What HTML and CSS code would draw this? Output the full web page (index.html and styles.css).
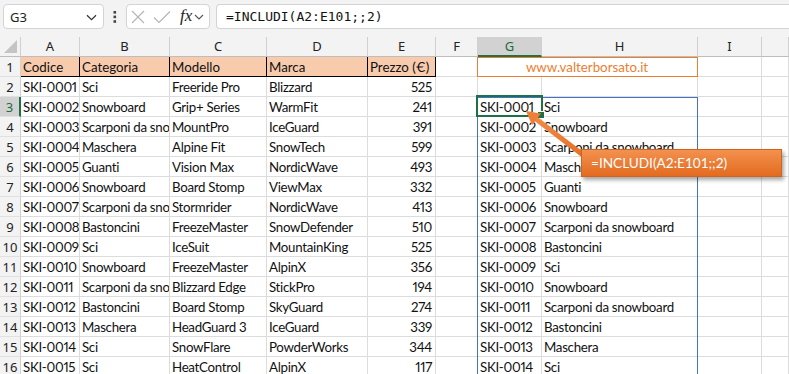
FILE: index.html
```html
<!DOCTYPE html>
<html lang="it">
<head>
<meta charset="utf-8">
<title>INCLUDI</title>
<link rel="stylesheet" href="styles.css">
</head>
<body>
<div class="app">
  <div class="fbar">
    <div class="namebox">
      <span class="nb-text">G3</span>
      <svg class="chev" width="11" height="7" viewBox="0 0 11 7"><path d="M1 1.2 L5.5 5.6 L10 1.2" fill="none" stroke="#333" stroke-width="1.2"/></svg>
    </div>
    <div class="dots">
      <svg width="4" height="12" viewBox="0 0 4 12"><rect x="0.5" y="0" width="2.6" height="2.6" fill="#444"/><rect x="0.5" y="4.6" width="2.6" height="2.6" fill="#444"/><rect x="0.5" y="9.2" width="2.6" height="2.6" fill="#444"/></svg>
    </div>
    <div class="fnbox">
      <svg class="ic-x" width="14" height="14" viewBox="0 0 14 14"><path d="M1 1 L13 13 M13 1 L1 13" stroke="#b4b4b4" stroke-width="1.1" fill="none"/></svg>
      <svg class="ic-check" width="18" height="14" viewBox="0 0 18 14"><path d="M1 7.5 L6 12.5 L17 1.5" stroke="#b4b4b4" stroke-width="1.1" fill="none"/></svg>
      <span class="fx">fx</span>
      <svg class="chev2" width="10" height="6" viewBox="0 0 10 6"><path d="M1 1 L5 5 L9 1" fill="none" stroke="#555" stroke-width="1.1"/></svg>
    </div>
    <div class="formula">=INCLUDI(A2:E101;;2)</div>
  </div>

  <div class="sheet">
    <div class="corner"><svg width="13" height="13" viewBox="0 0 13 13"><path d="M13 0 L13 13 L0 13 Z" fill="#c4c4c4"/></svg></div>
    <div class="ch">A</div><div class="ch">B</div><div class="ch">C</div><div class="ch">D</div><div class="ch">E</div><div class="ch">F</div><div class="ch ch-sel">G</div><div class="ch">H</div><div class="ch">I</div><div class="ch"></div>

    <div class="rh">1</div>
    <div class="c hd">Codice</div><div class="c hd">Categoria</div><div class="c hd">Modello</div><div class="c hd">Marca</div><div class="c hd">Prezzo (€)</div>
    <div class="c"></div>
    <div class="c web">www.valterborsato.it</div>
    <div class="c"></div><div class="c"></div>

    <div class="rh">2</div>
    <div class="c">SKI-0001</div><div class="c">Sci</div><div class="c">Freeride Pro</div><div class="c">Blizzard</div><div class="c n">525</div>
    <div class="c"></div><div class="c"></div><div class="c"></div><div class="c"></div><div class="c"></div>

    <div class="rh rh-sel">3</div>
    <div class="c">SKI-0002</div><div class="c">Snowboard</div><div class="c">Grip+ Series</div><div class="c">WarmFit</div><div class="c n">241</div>
    <div class="c"></div><div class="c">SKI-0001</div><div class="c">Sci</div><div class="c"></div><div class="c"></div>

    <div class="rh">4</div>
    <div class="c">SKI-0003</div><div class="c">Scarponi da snowboard</div><div class="c">MountPro</div><div class="c">IceGuard</div><div class="c n">391</div>
    <div class="c"></div><div class="c">SKI-0002</div><div class="c">Snowboard</div><div class="c"></div><div class="c"></div>

    <div class="rh">5</div>
    <div class="c">SKI-0004</div><div class="c">Maschera</div><div class="c">Alpine Fit</div><div class="c">SnowTech</div><div class="c n">599</div>
    <div class="c"></div><div class="c">SKI-0003</div><div class="c">Scarponi da snowboard</div><div class="c"></div><div class="c"></div>

    <div class="rh">6</div>
    <div class="c">SKI-0005</div><div class="c">Guanti</div><div class="c">Vision Max</div><div class="c">NordicWave</div><div class="c n">493</div>
    <div class="c"></div><div class="c">SKI-0004</div><div class="c">Maschera</div><div class="c"></div><div class="c"></div>

    <div class="rh">7</div>
    <div class="c">SKI-0006</div><div class="c">Snowboard</div><div class="c">Board Stomp</div><div class="c">ViewMax</div><div class="c n">332</div>
    <div class="c"></div><div class="c">SKI-0005</div><div class="c">Guanti</div><div class="c"></div><div class="c"></div>

    <div class="rh">8</div>
    <div class="c">SKI-0007</div><div class="c">Scarponi da snowboard</div><div class="c">Stormrider</div><div class="c">NordicWave</div><div class="c n">413</div>
    <div class="c"></div><div class="c">SKI-0006</div><div class="c">Snowboard</div><div class="c"></div><div class="c"></div>

    <div class="rh">9</div>
    <div class="c">SKI-0008</div><div class="c">Bastoncini</div><div class="c">FreezeMaster</div><div class="c">SnowDefender</div><div class="c n">510</div>
    <div class="c"></div><div class="c">SKI-0007</div><div class="c">Scarponi da snowboard</div><div class="c"></div><div class="c"></div>

    <div class="rh">10</div>
    <div class="c">SKI-0009</div><div class="c">Sci</div><div class="c">IceSuit</div><div class="c">MountainKing</div><div class="c n">525</div>
    <div class="c"></div><div class="c">SKI-0008</div><div class="c">Bastoncini</div><div class="c"></div><div class="c"></div>

    <div class="rh">11</div>
    <div class="c">SKI-0010</div><div class="c">Snowboard</div><div class="c">FreezeMaster</div><div class="c">AlpinX</div><div class="c n">356</div>
    <div class="c"></div><div class="c">SKI-0009</div><div class="c">Sci</div><div class="c"></div><div class="c"></div>

    <div class="rh">12</div>
    <div class="c">SKI-0011</div><div class="c">Scarponi da snowboard</div><div class="c">Blizzard Edge</div><div class="c">StickPro</div><div class="c n">194</div>
    <div class="c"></div><div class="c">SKI-0010</div><div class="c">Snowboard</div><div class="c"></div><div class="c"></div>

    <div class="rh">13</div>
    <div class="c">SKI-0012</div><div class="c">Bastoncini</div><div class="c">Board Stomp</div><div class="c">SkyGuard</div><div class="c n">274</div>
    <div class="c"></div><div class="c">SKI-0011</div><div class="c">Scarponi da snowboard</div><div class="c"></div><div class="c"></div>

    <div class="rh">14</div>
    <div class="c">SKI-0013</div><div class="c">Maschera</div><div class="c">HeadGuard 3</div><div class="c">IceGuard</div><div class="c n">339</div>
    <div class="c"></div><div class="c">SKI-0012</div><div class="c">Bastoncini</div><div class="c"></div><div class="c"></div>

    <div class="rh">15</div>
    <div class="c">SKI-0014</div><div class="c">Sci</div><div class="c">SnowFlare</div><div class="c">PowderWorks</div><div class="c n">344</div>
    <div class="c"></div><div class="c">SKI-0013</div><div class="c">Maschera</div><div class="c"></div><div class="c"></div>

    <div class="rh">16</div>
    <div class="c">SKI-0015</div><div class="c">Sci</div><div class="c">HeatControl</div><div class="c">AlpinX</div><div class="c n">117</div>
    <div class="c"></div><div class="c">SKI-0014</div><div class="c">Sci</div><div class="c"></div><div class="c"></div>

    <div class="spill"></div>
    <div class="selection"><div class="handle"></div></div>
  </div>

  <svg class="arrow" width="789" height="374" viewBox="0 0 789 374">
    <defs>
      <linearGradient id="ag" x1="0" y1="0" x2="1" y2="1">
        <stop offset="0" stop-color="#f08a45"/>
        <stop offset="1" stop-color="#e2691d"/>
      </linearGradient>
    </defs>
    <line x1="600" y1="168" x2="536" y2="119" stroke="url(#ag)" stroke-width="5"/>
    <polygon points="526,111 541,113.5 532,125" fill="#ee7f38"/>
  </svg>
  <div class="callout">=INCLUDI(A2:E101;;2)</div>
</div>
</body>
</html>
```
FILE: styles.css
```css
html, body {
  margin: 0;
  padding: 0;
}
body {
  width: 789px;
  height: 374px;
  overflow: hidden;
  background: #ffffff;
}
.app {
  position: relative;
  width: 789px;
  height: 374px;
  overflow: hidden;
  font-family: "Lato", "Noto Sans", sans-serif;
}

/* formula bar */
.fbar {
  height: 37px;
  box-sizing: border-box;
  background: #f3f3f3;
  display: flex;
  align-items: flex-start;
  padding: 4px 0 0 3px;
}
.namebox {
  width: 101px;
  height: 25px;
  box-sizing: border-box;
  background: #fff;
  border: 1px solid #d4d4d4;
  border-radius: 4px;
  display: flex;
  align-items: center;
  justify-content: space-between;
  padding: 0 6px 0 6px;
}
.nb-text {
  font-family: "Noto Sans", "Open Sans", sans-serif;
  font-size: 13px;
  color: #222;
}
.chev { margin-top: 1px; }
.dots {
  width: 22px;
  height: 25px;
  display: flex;
  align-items: center;
  justify-content: center;
}
.fnbox {
  width: 84px;
  height: 25px;
  box-sizing: border-box;
  background: #fff;
  border: 1px solid #d4d4d4;
  border-radius: 4px;
  display: flex;
  align-items: center;
  padding-left: 4px;
}
.ic-x { margin-right: 8px; }
.ic-check { margin-right: 9px; }
.fx {
  font-family: "Liberation Serif", "DejaVu Serif", serif;
  font-style: italic;
  font-size: 17px;
  color: #222;
  line-height: 1;
  margin-top: -2px;
  margin-right: 2px;
}
.formula {
  margin-left: 6px;
  flex: 1;
  height: 25px;
  box-sizing: border-box;
  background: #fff;
  border: 1px solid #d4d4d4;
  border-right: none;
  border-radius: 4px 0 0 4px;
  padding-left: 9px;
  font-family: "DejaVu Sans Mono", "Liberation Mono", monospace;
  font-size: 13px;
  line-height: 23px;
  color: #111;
}

/* sheet grid */
.sheet {
  position: relative;
  display: grid;
  grid-template-columns: 21px 59px 90px 97px 101px 68px 42px 64px 156px 64px 1fr;
  grid-auto-rows: 20px;
}
.corner {
  background: #f3f3f3;
  border-right: 1px solid #d0d0d0;
  border-bottom: 1px solid #bdbdbd;
  box-sizing: border-box;
  display: flex;
  align-items: flex-end;
  justify-content: flex-end;
  padding: 0 3px 3px 0;
}
.ch {
  background: #f3f3f3;
  border-right: 1px solid #d0d0d0;
  border-bottom: 1px solid #bdbdbd;
  box-sizing: border-box;
  text-align: center;
  font-family: "Noto Sans", "Open Sans", sans-serif;
  font-size: 13px;
  line-height: 19px;
  color: #222;
}
.ch-sel {
  background: #d2d2d2;
  color: #1e6b41;
  border-bottom: 2px solid #1e7145;
}
.rh {
  background: #f3f3f3;
  border-right: 1px solid #d0d0d0;
  border-bottom: 1px solid #e0e0e0;
  box-sizing: border-box;
  text-align: center;
  font-family: "Noto Sans", "Open Sans", sans-serif;
  font-size: 13px;
  line-height: 20px;
  color: #222;
}
.rh-sel {
  background: #d2d2d2;
  color: #1e6b41;
  border-right: 2px solid #1e7145;
}
.c {
  border-right: 1px solid #dcdcdc;
  border-bottom: 1px solid #dcdcdc;
  box-sizing: border-box;
  padding: 0 3px 0 2px;
  font-size: 13.3px;
  letter-spacing: -0.3px;
  font-variant-numeric: proportional-nums;
  line-height: 20px;
  color: #111;
  white-space: nowrap;
  overflow: hidden;
  text-overflow: clip;
}
.c.n { text-align: right; }
.c.hd {
  background: #f8cbad;
  border-right: 1px solid #000;
  border-bottom: 1px solid #000;
  letter-spacing: 0;
}
.c.web {
  grid-column: span 2;
  margin-left: -1px;
  border: 1px solid #ed7d31;
  color: #ed7d31;
  text-align: center;
  line-height: 18px;
  letter-spacing: 0;
}

/* overlays */
.spill {
  position: absolute;
  left: 477px;
  top: 60px;
  width: 221px;
  height: 300px;
  box-sizing: border-box;
  border: 1px solid #4472c4;
  pointer-events: none;
}
.selection {
  position: absolute;
  left: 476px;
  top: 58px;
  width: 67px;
  height: 22px;
  box-sizing: border-box;
  border: 2px solid #1e7145;
  pointer-events: none;
}
.handle {
  position: absolute;
  right: -4px;
  bottom: -4px;
  width: 6px;
  height: 6px;
  background: #1e7145;
  border: 1px solid #fff;
}
.arrow {
  position: absolute;
  left: 0;
  top: 0;
  pointer-events: none;
}
.callout {
  position: absolute;
  left: 581px;
  top: 149px;
  width: 201px;
  height: 28px;
  box-sizing: border-box;
  background: linear-gradient(#f3914f, #e36b1f);
  border: 1px solid #d0641c;
  box-shadow: 2px 3px 4px rgba(0, 0, 0, 0.35);
  color: #fff;
  font-family: "Lato", "Noto Sans", sans-serif;
  font-size: 13.6px;
  line-height: 26px;
  padding-left: 9px;
}
```
